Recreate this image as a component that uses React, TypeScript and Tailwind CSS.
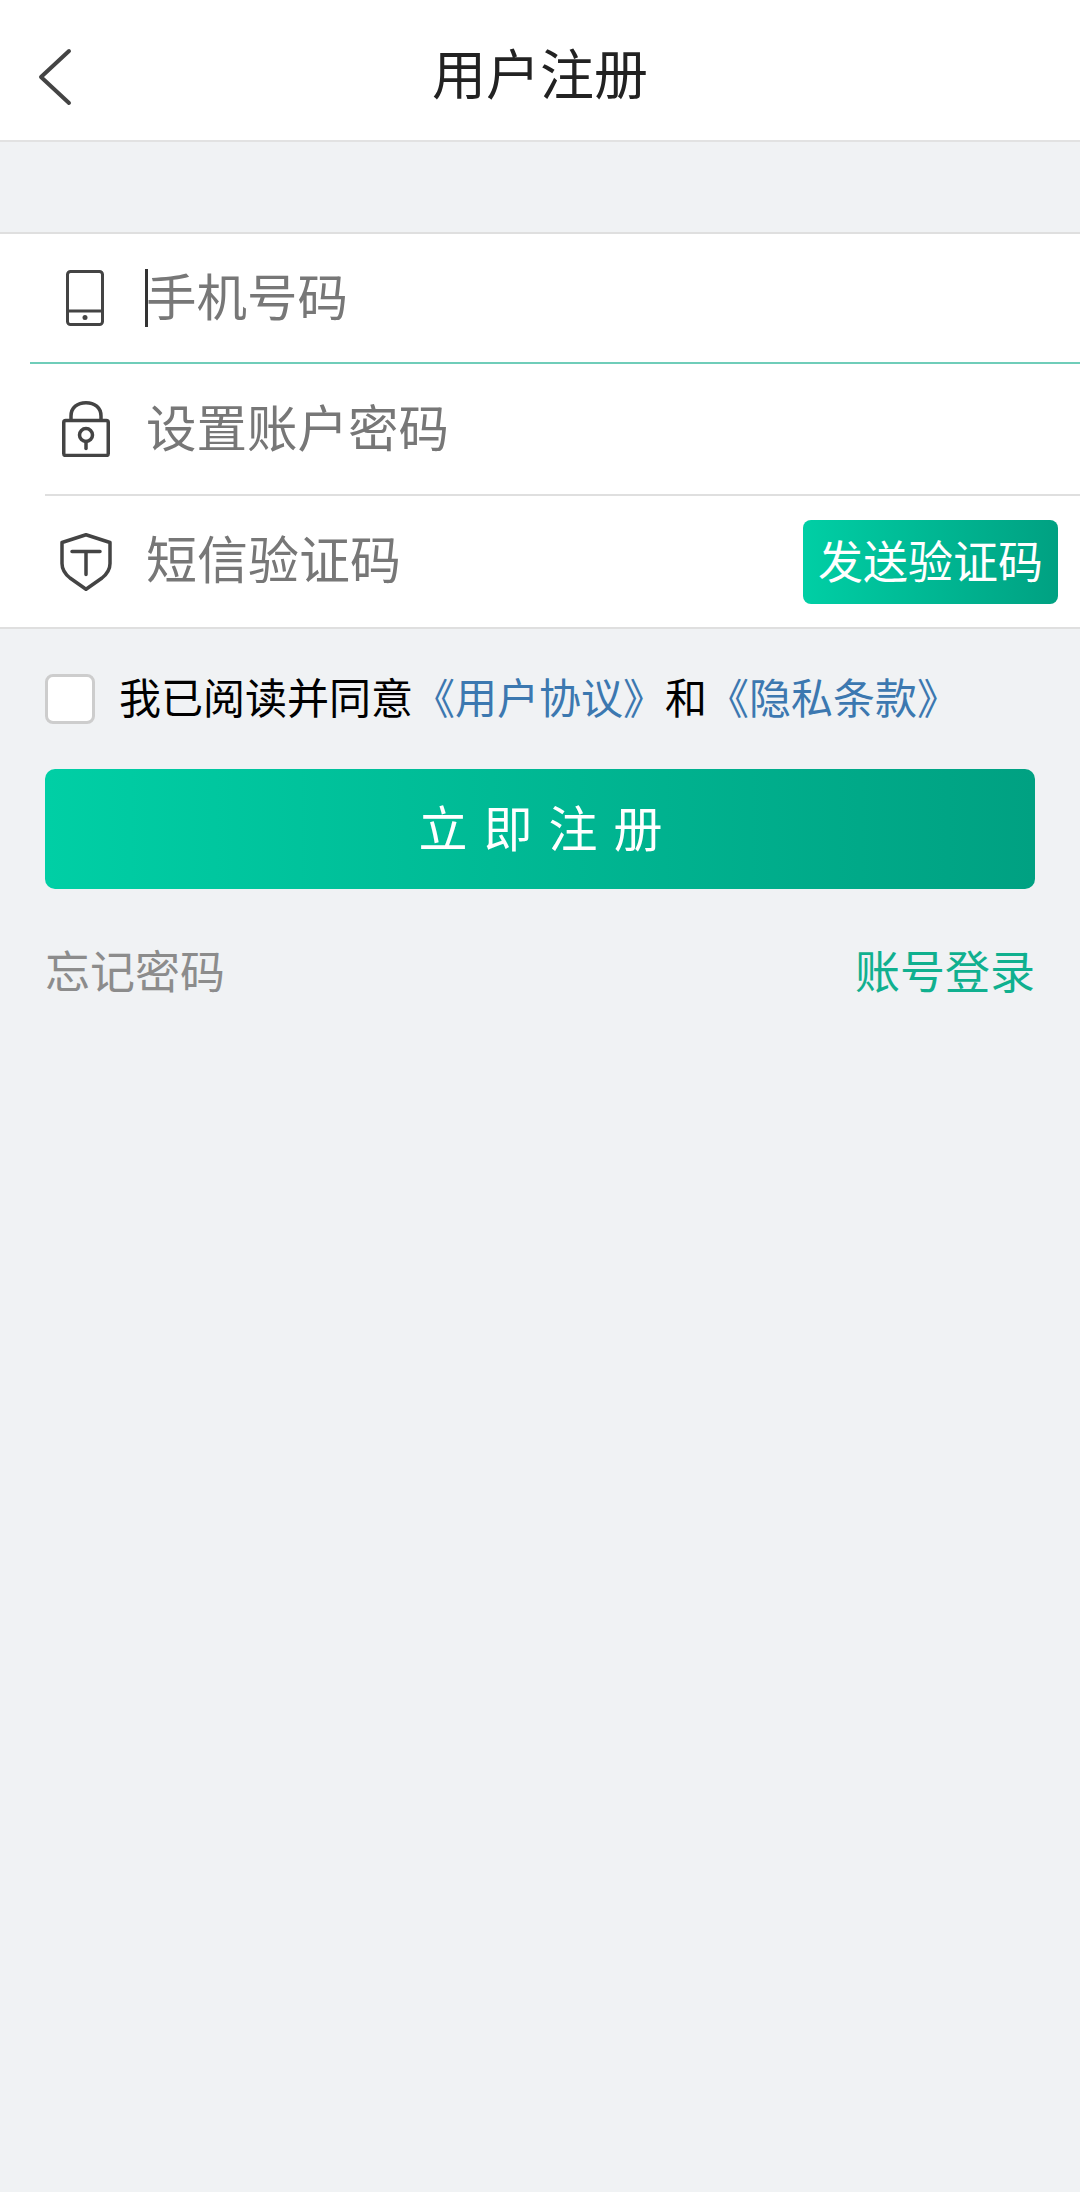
import React from 'react';

const font = { fontFamily: '"Noto Sans CJK SC", sans-serif' };

const PhoneIcon = () => (
  <svg width="38" height="56" viewBox="0 0 38 56" fill="none" stroke="#444" strokeWidth="3">
    <rect x="1.5" y="1.5" width="35" height="53" rx="3" />
    <path d="M1.5 41h35" />
    <circle cx="19" cy="47.5" r="2.500" fill="#444" stroke="none" />
  </svg>
);

const LockIcon = () => (
  <svg width="48" height="56" viewBox="0 0 48 56" fill="none" stroke="#444" strokeWidth="3.500" strokeLinecap="round">
    <rect x="1.750" y="19.500" width="44.500" height="35" rx="2" />
    <path d="M9 19v-4C9 6.500 15.500 1.750 24 1.750S39 6.500 39 15v4" />
    <circle cx="24" cy="34" r="6.500" />
    <path d="M24 40.500v7" />
  </svg>
);

const ShieldIcon = () => (
  <svg width="52" height="58" viewBox="0 0 52 58" fill="none" stroke="#444" strokeWidth="3.500" strokeLinecap="round" strokeLinejoin="round">
    <path d="M26 1.750 50 9.500v21c0 6-3 10.500-8 14.500L26 56.250 10 45C5 41 2 36.500 2 30.500v-21z" />
    <path d="M12 18.500h28M26 18.500v23" />
  </svg>
);

export default function App() {
  return (
    <div className="min-h-screen bg-[#f0f2f4]" style={font}>
      <header className="relative flex h-[142px] items-center justify-center border-b-2 border-[#e2e2e2] bg-white">
        <svg className="absolute left-[37px] top-[48px]" width="36" height="58" viewBox="0 0 36 58" fill="none" stroke="#444" strokeWidth="4" strokeLinecap="round" strokeLinejoin="round">
          <path d="M32 3 4 29l28 26" />
        </svg>
        <h1 className="pt-[3px] text-[54px] leading-none font-normal text-[#222]">用户注册</h1>
      </header>

      <div className="mt-[90px] border-y-2 border-[#dfdfdf] bg-white">
        <div className="ml-[30px] flex h-[130px] items-center border-b-2 border-[#6fcdb9]">
          <div className="flex w-[110px] justify-center"><PhoneIcon /></div>
          <span className="relative ml-[6px] pb-[8px] text-[50.500px] leading-none text-[#777]">
            <span className="absolute -left-[1px] top-[0px] h-[58px] w-[3px] bg-[#333]" />
            手机号码
          </span>
        </div>
        <div className="ml-[45px] flex h-[132px] items-center border-b-2 border-[#dfdfdf]">
          <div className="flex w-[101px] justify-center pr-[20px]"><LockIcon /></div>
          <span className="pb-[8px] text-[50.500px] leading-none text-[#777]">设置账户密码</span>
        </div>
        <div className="ml-[45px] flex h-[131px] items-center justify-between pr-[22px]">
          <div className="flex items-center">
            <div className="flex w-[101px] justify-center pr-[20px]"><ShieldIcon /></div>
            <span className="pb-[8px] text-[51px] leading-none text-[#777]">短信验证码</span>
          </div>
          <button className="flex h-[84px] w-[255px] items-center justify-center rounded-[8px] bg-gradient-to-r from-[#00cfa5] to-[#00a182] pb-[4px] text-[45px] leading-none text-white">
            发送验证码
          </button>
        </div>
      </div>

      <div className="mt-[45px] flex items-center px-[45px]">
        <span className="h-[50px] w-[50px] rounded-[8px] border-[3px] border-[#cdcdcd] bg-white" />
        <p className="ml-[24px] whitespace-nowrap pb-[7px] text-[42px] leading-none text-black">
          我已阅读并同意
          <span className="text-[#3c78b0]">《用户协议》</span>
          和
          <span className="text-[#3c78b0]">《隐私条款》</span>
        </p>
      </div>

      <div className="px-[45px]">
        <button className="mt-[45px] flex h-[120px] w-full items-center justify-center rounded-[10px] bg-gradient-to-r from-[#00cfa5] to-[#00a182] pb-[8px] pl-[17px] text-[49px] leading-none tracking-[16px] text-white">
          立即注册
        </button>
        <div className="mt-[58px] flex items-center justify-between text-[45px] leading-none">
          <span className="text-[#8c8c8c]">忘记密码</span>
          <span className="text-[#10b08f]">账号登录</span>
        </div>
      </div>
    </div>
  );
}
